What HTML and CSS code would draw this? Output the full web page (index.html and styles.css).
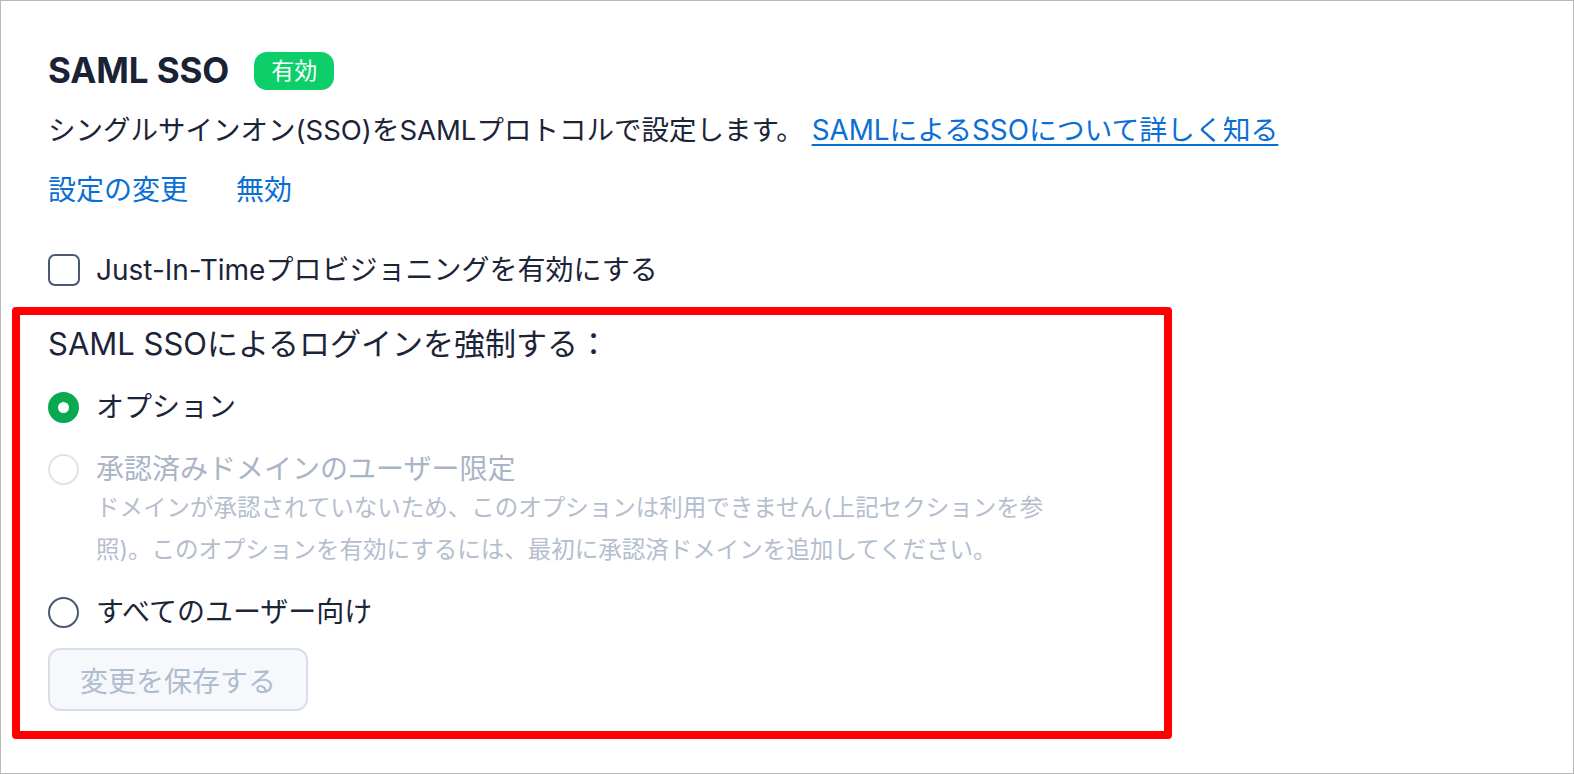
FILE: index.html
```html
<!DOCTYPE html>
<html lang="ja">
<head>
<meta charset="utf-8">
<link rel="stylesheet" href="styles.css">
</head>
<body>
<div class="frame">
  <div class="title-row">
    <h1 class="title">SAML SSO</h1>
    <span class="badge">有効</span>
  </div>
  <p class="desc">シングルサインオン(SSO)をSAMLプロトコルで設定します。<a class="link" href="#">SAMLによるSSOについて詳しく知る</a></p>
  <div class="actions">
    <a class="action" href="#">設定の変更</a>
    <a class="action" href="#">無効</a>
  </div>
  <label class="check-row">
    <span class="checkbox"></span>
    <span class="row-label">Just-In-Timeプロビジョニングを有効にする</span>
  </label>
  <section class="highlight">
    <div class="force-label">SAML SSOによるログインを強制する：</div>
    <div class="radio-row first">
      <span class="radio checked"></span>
      <span class="row-label">オプション</span>
    </div>
    <div class="radio-row disabled">
      <span class="radio off"></span>
      <div class="radio-text">
        <span class="row-label muted">承認済みドメインのユーザー限定</span>
        <p class="hint">ドメインが承認されていないため、このオプションは利用できません(上記セクションを参<br>照)。このオプションを有効にするには、最初に承認済ドメインを追加してください。</p>
      </div>
    </div>
    <div class="radio-row last">
      <span class="radio"></span>
      <span class="row-label">すべてのユーザー向け</span>
    </div>
    <button class="save" disabled>変更を保存する</button>
  </section>
</div>
</body>
</html>
```

FILE: styles.css
```css
html, body {
  margin: 0;
  padding: 0;
  background: #ffffff;
}
body {
  font-family: "Inter", "Noto Sans CJK JP", sans-serif;
  color: #1c2437;
}
.frame {
  box-sizing: border-box;
  width: 1574px;
  height: 774px;
  border: 1px solid #b9b9b9;
  padding: 49px 0 0 47px;
}
.title-row {
  display: flex;
  align-items: center;
  gap: 25px;
  height: 40px;
}
.title {
  margin: 0;
  font-size: 35px;
  font-weight: 700;
  line-height: 40px;
  letter-spacing: -0.1px;
  color: #1a2236;
}
.badge {
  display: inline-flex;
  align-items: center;
  justify-content: center;
  height: 38px;
  padding: 0 17px;
  border-radius: 13px;
  background: #0ccf6a;
  color: #ffffff;
  font-size: 23px;
  line-height: 38px;
  margin-top: 2px;
}
.desc {
  margin: 20px 0 0;
  font-size: 27.5px;
  line-height: 40px;
  color: #1c2437;
}
.link {
  color: #0a6fd4;
  text-decoration: underline;
  text-underline-offset: 4px;
  text-decoration-thickness: 2px;
  margin-left: 8px;
  font-size: 27.8px;
}
.actions {
  display: flex;
  gap: 48px;
  margin-top: 20px;
  height: 40px;
  align-items: center;
}
.action {
  color: #0a6fd4;
  text-decoration: none;
  font-size: 28px;
  line-height: 40px;
}
.check-row {
  display: flex;
  align-items: center;
  gap: 16px;
  margin-top: 40px;
  height: 40px;
}
.checkbox {
  box-sizing: border-box;
  width: 32px;
  height: 32px;
  border: 2px solid #4b5874;
  border-radius: 7px;
  flex: none;
}
.row-label {
  font-size: 28px;
  line-height: 40px;
  color: #1c2437;
}
.highlight {
  box-sizing: border-box;
  width: 1160px;
  height: 432px;
  margin: 17px 0 0 -36px;
  border: 8px solid #ff0000;
  border-radius: 4px;
  padding: 9px 0 0 28px;
}
.force-label {
  font-size: 31px;
  line-height: 40px;
  color: #1c2437;
}
.radio-row {
  display: flex;
  align-items: center;
  gap: 17px;
}
.radio-row.first {
  margin-top: 23px;
  height: 40px;
}
.radio-row.disabled {
  margin-top: 24px;
  align-items: flex-start;
}
.radio-row.disabled .radio {
  margin-top: 3px;
}
.radio-row.last {
  margin-top: 21px;
  height: 40px;
}
.radio {
  box-sizing: border-box;
  width: 31px;
  height: 31px;
  border-radius: 50%;
  border: 2px solid #4b5874;
  flex: none;
  background: #fff;
}
.radio.checked {
  border: 10px solid #0aa851;
  background: #ffffff;
}
.radio.off {
  border-color: #dfe4ec;
}
.radio-text {
  display: flex;
  flex-direction: column;
}
.row-label.muted {
  color: #a9b4c7;
  line-height: 36px;
}
.hint {
  margin: 0;
  font-size: 23.5px;
  line-height: 42px;
  color: #b4bece;
}
.save {
  display: block;
  box-sizing: border-box;
  margin-top: 16px;
  width: 260px;
  height: 63px;
  border: 2px solid #d6deea;
  border-radius: 12px;
  background: #f6f8fb;
  color: #b0bccf;
  font-family: "Inter", "Noto Sans CJK JP", sans-serif;
  font-size: 28px;
  padding: 0;
}
```
